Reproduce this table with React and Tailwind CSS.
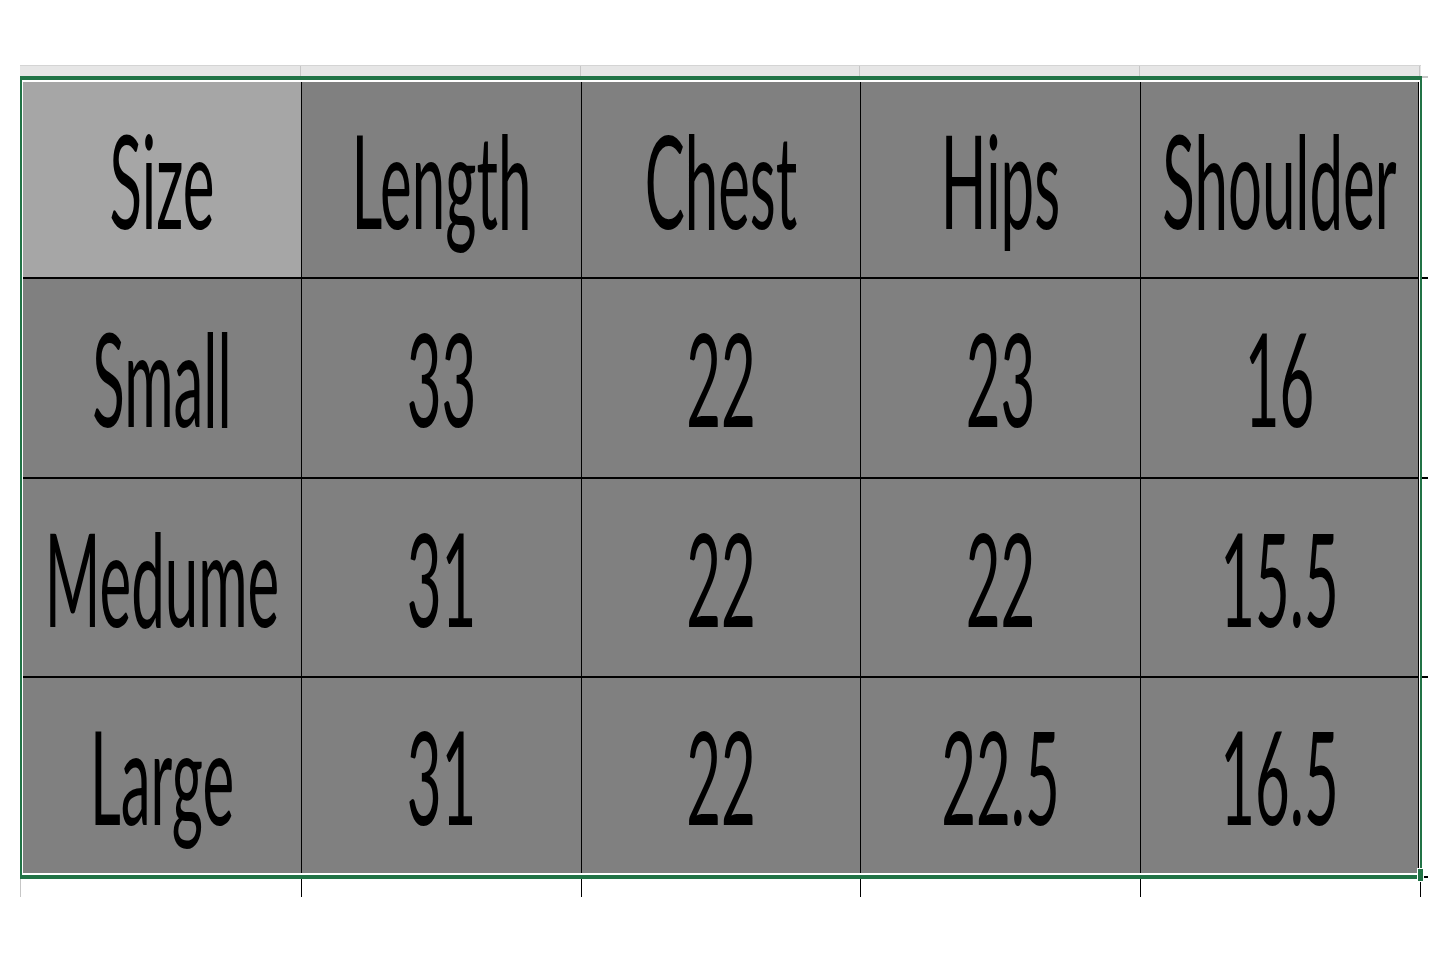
import React from "react";

const headers = ["Size", "Length", "Chest", "Hips", "Shoulder"];

const rows = [
  ["Small", "33", "22", "23", "16"],
  ["Medume", "31", "22", "22", "15.5"],
  ["Large", "31", "22", "22.5", "16.5"],
];

// row heights for header + 3 body rows
const rowHeights = ["h-[195px]", "h-[198px]", "h-[197px]", "h-[195px]"];

function Cell({ text, light, height }) {
  return (
    <div
      className={`${height} flex items-center justify-center overflow-hidden ${
        light ? "bg-[#a6a6a6]" : "bg-[#808080]"
      }`}
    >
      <span className="inline-block leading-none text-black text-[60px] scale-y-[2.15] font-['Lato',sans-serif]">
        {text}
      </span>
    </div>
  );
}

export default function App() {
  return (
    <div className="min-h-screen w-full bg-white pt-[65px] pl-[20px]">
      {/* column header strip */}
      <div className="flex w-[1401px] h-[11px] bg-[#e6e6e6] border-t border-[#d4d4d4]">
        <div className="w-[281px] border-r border-[#c6c6c6]" />
        <div className="w-[280px] border-r border-[#c6c6c6]" />
        <div className="w-[279px] border-r border-[#c6c6c6]" />
        <div className="w-[280px] border-r border-[#c6c6c6]" />
        <div className="w-[280px] border-r border-[#c6c6c6]" />
      </div>

      <div className="flex">
        {/* selection frame */}
        <div className="relative w-[1402px] border-x-2 border-y-4 border-[#217346] bg-white px-[1px] py-[2px]">
          <div className="grid grid-cols-[278px_279px_278px_279px_277px] gap-x-[1px] gap-y-[2px] bg-black">
            {headers.map((h, i) => (
              <Cell key={h} text={h} light={i === 0} height={rowHeights[0]} />
            ))}
            {rows.map((row, r) =>
              row.map((v, c) => (
                <Cell key={r + "-" + c} text={v} height={rowHeights[r + 1]} />
              ))
            )}
          </div>
          {/* fill handle */}
          <div className="absolute -right-[4px] -bottom-[7px] w-[7px] h-[14px] bg-[#217346] border border-white" />
        </div>

        {/* next column gridline stubs */}
        <div className="w-[6px] flex flex-col">
          <div className="h-[203px] border-t-2 border-t-[#c6c6c6] border-b-2 border-b-black" />
          <div className="h-[200px] border-b-2 border-black" />
          <div className="h-[199px] border-b-2 border-black" />
          <div className="h-[200px] border-b-2 border-black" />
        </div>
      </div>

      {/* next row gridline stubs */}
      <div className="flex w-[1401px] h-[18px]">
        <div className="w-[2px] border-l border-[#c6c6c6]" />
        <div className="w-[280px] border-r border-black" />
        <div className="w-[280px] border-r border-black" />
        <div className="w-[279px] border-r border-black" />
        <div className="w-[280px] border-r border-black" />
        <div className="w-[280px] border-r border-black" />
      </div>
    </div>
  );
}
